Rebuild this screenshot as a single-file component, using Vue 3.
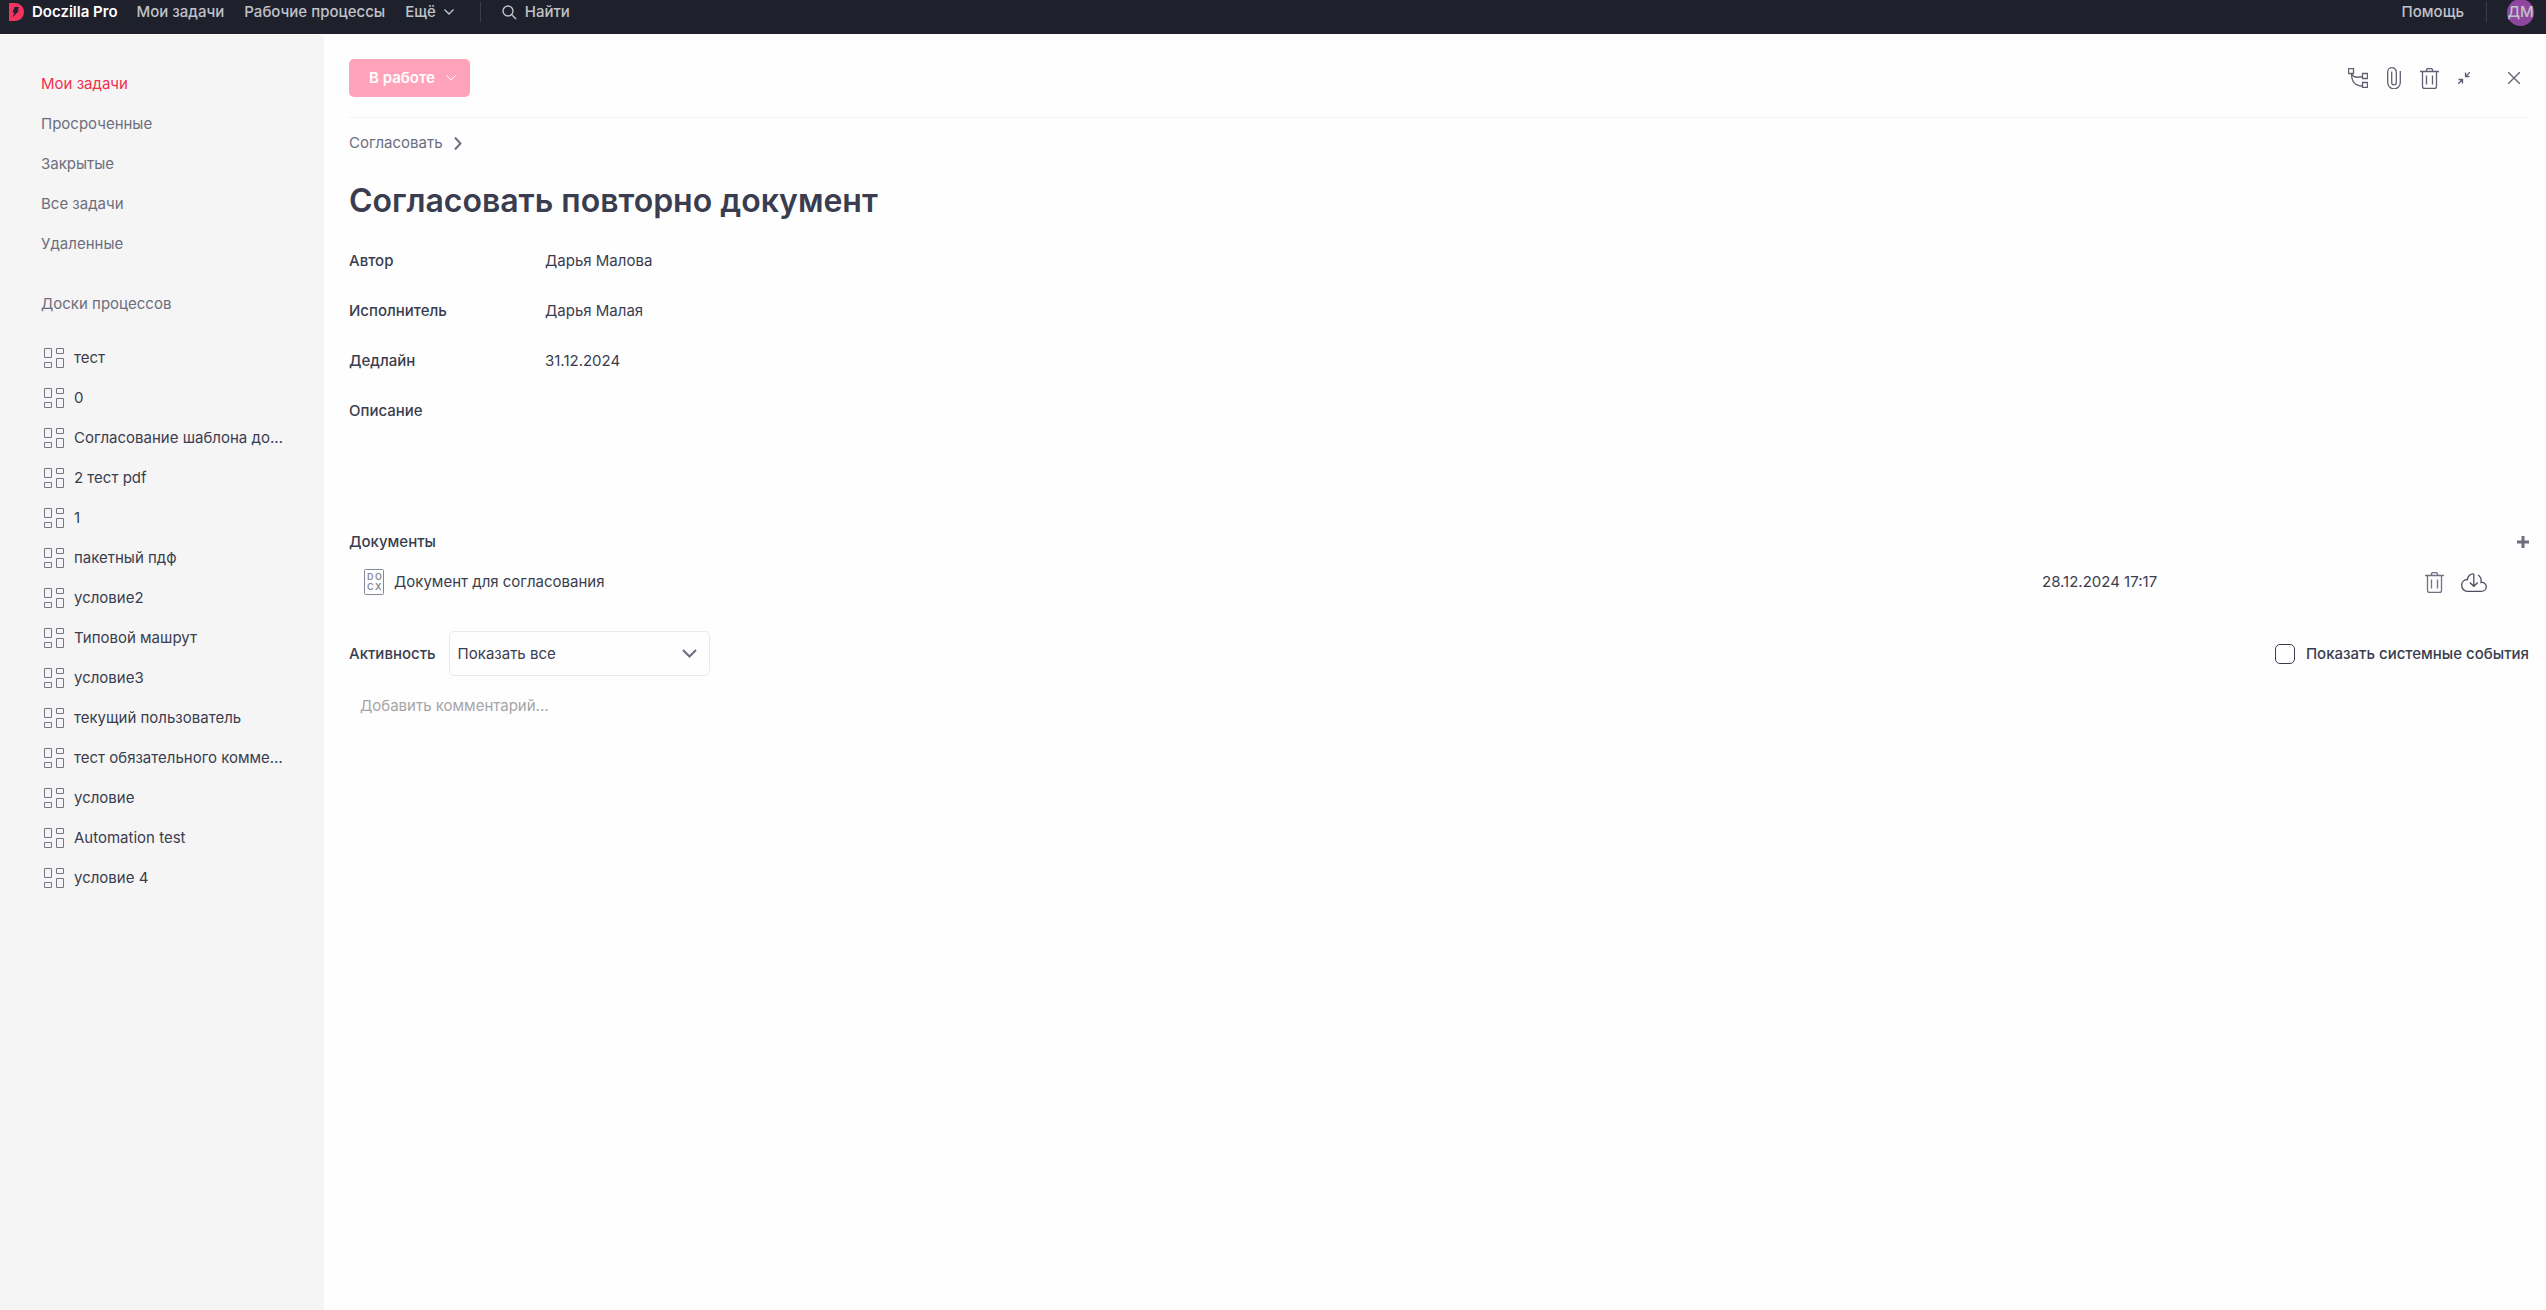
<script setup>
import { ref } from 'vue'

const filters = ['Мои задачи', 'Просроченные', 'Закрытые', 'Все задачи', 'Удаленные']
const boards = [
  'тест',
  '0',
  'Согласование шаблона до…',
  '2 тест pdf',
  '1',
  'пакетный пдф',
  'условие2',
  'Типовой машрут',
  'условие3',
  'текущий пользователь',
  'тест обязательного комме…',
  'условие',
  'Automation test',
  'условие 4',
]
const fields = [
  { label: 'Автор', value: 'Дарья Малова' },
  { label: 'Исполнитель', value: 'Дарья Малая' },
  { label: 'Дедлайн', value: '31.12.2024' },
  { label: 'Описание', value: '' },
]
const activity = ref('Показать все')
const showSystem = ref(false)
const comment = ref('')
</script>

<template>
  <div class="page">
    <header class="topbar">
      <a class="brand" href="#">
        <svg width="15" height="18" viewBox="0 0 15 18">
          <path d="M0 0H6C11 0 15 4 15 9S11 18 6 18H0Z" fill="#f2355f" />
          <path d="M5.500 4H10L8.500 7.500H10.200L3.500 14.500L5.500 9.500H3.500Z" fill="#1e202c" />
        </svg>
        <span>Doczilla Pro</span>
      </a>
      <nav class="topnav">
        <a href="#">Мои задачи</a>
        <a href="#">Рабочие процессы</a>
        <button type="button" class="more">
          Ещё
          <svg width="10" height="6" viewBox="0 0 10 6"><path d="M.5 .5L5 5L9.500 .5" /></svg>
        </button>
      </nav>
      <span class="rule"></span>
      <button type="button" class="search">
        <svg width="15" height="15" viewBox="0 0 15 15"><circle cx="6" cy="6" r="5" /><path d="M9.500 9.500L14 14" /></svg>
        Найти
      </button>
      <a class="help" href="#">Помощь</a>
      <span class="rule rule-right"></span>
      <button type="button" class="avatar">ДМ</button>
    </header>

    <div class="body">
      <aside class="sidebar">
        <nav class="filters">
          <a v-for="(f, i) in filters" :key="f" href="#" :class="{ active: i === 0 }">{{ f }}</a>
        </nav>
        <h2 class="boards-title">Доски процессов</h2>
        <nav class="boards">
          <a v-for="b in boards" :key="b" href="#">
            <svg width="20" height="20" viewBox="0 0 20 20">
              <path d="M.5 .5h7v9h-7zM12.500 .5h7v5h-7zM.5 14.500h7v5h-7zM12.500 10.500h7v9h-7z" />
            </svg>
            <span>{{ b }}</span>
          </a>
        </nav>
      </aside>

      <main class="task">
        <div class="toolbar">
          <button type="button" class="status">
            В работе
            <svg width="10" height="6" viewBox="0 0 10 6"><path d="M.5 .5L5 5L9.500 .5" /></svg>
          </button>
          <div class="tools">
            <button type="button" aria-label="Процесс">
              <svg width="20" height="20" viewBox="0 0 20 20">
                <path d="M.5 .5h5v5h-5zM14.500 5.500h5v5h-5zM14.500 14.500h5v5h-5zM3.500 5.500C3.500 13 6 18 14.500 18M3.500 5.500C5 9.500 9 10 14.500 8.500" />
              </svg>
            </button>
            <button type="button" aria-label="Вложения">
              <svg width="14" height="22" viewBox="0 0 14 22">
                <path d="M13.300 4V15.500A6.300 6.300 0 0 1 .7 15.500V5A4.300 4.300 0 0 1 9.300 5V15.500A2.300 2.300 0 0 1 4.700 15.500V4.500" />
              </svg>
            </button>
            <button type="button" aria-label="Удалить">
              <svg width="19" height="21" viewBox="0 0 19 21">
                <path d="M0 3.500H19M6.500 3.500V2A1.500 1.500 0 0 1 8 .5H11A1.500 1.500 0 0 1 12.500 2V3.500M2.500 3.500V18.500A2 2 0 0 0 4.500 20.500H14.500A2 2 0 0 0 16.500 18.500V3.500M6.500 7.500V16.500M12.500 7.500V16.500" />
              </svg>
            </button>
            <button type="button" aria-label="Свернуть">
              <svg width="12" height="12" viewBox="0 0 12 12">
                <path d="M12 0L7.500 4.500M7.500 .5V4.500H11.500M0 12L4.500 7.500M.5 7.500H4.500V11.500" />
              </svg>
            </button>
            <button type="button" class="close" aria-label="Закрыть">
              <svg width="12" height="12" viewBox="0 0 12 12"><path d="M0 0L12 12M12 0L0 12" /></svg>
            </button>
          </div>
        </div>

        <nav class="crumbs">
          <a href="#">Согласовать</a>
          <svg width="8" height="13" viewBox="0 0 8 13"><path d="M1 .5L6.500 6.500L1 12.500" /></svg>
        </nav>

        <h1>Согласовать повторно документ</h1>

        <dl class="fields">
          <div v-for="f in fields" :key="f.label">
            <dt>{{ f.label }}</dt>
            <dd>{{ f.value }}</dd>
          </div>
        </dl>

        <section class="docs">
          <div class="docs-head">
            <h3>Документы</h3>
            <button type="button" aria-label="Добавить">
              <svg width="12" height="12" viewBox="0 0 12 12"><path d="M6 0V12M0 6H12" /></svg>
            </button>
          </div>
          <div class="doc">
            <svg class="docx" width="20" height="26" viewBox="0 0 20 26">
              <rect x=".5" y=".5" width="19" height="25" rx="1" />
              <g>
                <text x="3" y="11">D</text><text x="11" y="11">O</text>
                <text x="3" y="21">C</text><text x="11" y="21">X</text>
              </g>
            </svg>
            <a class="doc-name" href="#">Документ для согласования</a>
            <time>28.12.2024 17:17</time>
            <div class="doc-tools">
              <button type="button" aria-label="Удалить документ">
                <svg width="19" height="21" viewBox="0 0 19 21">
                  <path d="M0 3.500H19M6.500 3.500V2A1.500 1.500 0 0 1 8 .5H11A1.500 1.500 0 0 1 12.500 2V3.500M2.500 3.500V18.500A2 2 0 0 0 4.500 20.500H14.500A2 2 0 0 0 16.500 18.500V3.500M6.500 7.500V16.500M12.500 7.500V16.500" />
                </svg>
              </button>
              <button type="button" class="cloud" aria-label="Скачать документ">
                <svg width="26" height="19" viewBox="0 0 26 19">
                  <path d="M12.800 1C9 .5 6.500 3.500 6.500 6.500C3 6.500 .7 9 .7 12.200C.7 15.500 3 18.300 6.500 18.300H20C23.500 18.300 25.300 16 25.300 13.700C25.300 11 23 9 20 9.500C20.500 6 19.500 3.500 17 2M12.800 1V13M8.800 9.500L12.800 13.300L16.800 9.500" />
                </svg>
              </button>
            </div>
          </div>
        </section>

        <section class="activity">
          <div class="activity-head">
            <label class="strong" for="activity">Активность</label>
            <div class="select">
              <select id="activity" v-model="activity">
                <option>Показать все</option>
              </select>
              <svg width="15" height="9" viewBox="0 0 15 9"><path d="M1 1L7.500 7.500L14 1" /></svg>
            </div>
            <label class="check">
              <input v-model="showSystem" type="checkbox" />
              Показать системные события
            </label>
          </div>
          <input v-model="comment" class="comment" type="text" aria-label="Комментарий" placeholder="Добавить комментарий..." />
        </section>
      </main>
    </div>
  </div>
</template>

<style>
body {
  margin: 0;
  background: #fefefe;
}
</style>

<style scoped>
.page {
  display: flex;
  flex-direction: column;
  min-height: 100vh;
  font: 15px/20px Inter, "Liberation Sans", sans-serif;
  color: #3a3d4f;
}
a {
  color: inherit;
  text-decoration: none;
}
button {
  display: flex;
  align-items: center;
  padding: 0;
  border: 0;
  background: none;
  color: inherit;
  font: inherit;
}
svg {
  display: block;
  flex: none;
  fill: none;
  stroke: currentColor;
}
h1, h2, h3, dl, dd {
  margin: 0;
}

.topbar {
  display: flex;
  align-items: center;
  box-sizing: border-box;
  height: 34px;
  padding: 0 12px 10px 9px;
  background: #1e202c;
  color: #c1c2c8;
  font-weight: 500;
}
.brand {
  display: flex;
  align-items: center;
  gap: 8px;
  color: #fff;
  font-weight: 600;
}
.brand svg {
  stroke: none;
}
.topnav {
  display: flex;
  gap: 20px;
  margin-left: 19px;
}
.more {
  gap: 8px;
}
.rule {
  width: 1px;
  height: 20px;
  margin: 0 21px 0 26px;
  background: #3b3d4d;
}
.rule-right {
  margin: 0 20px 0 22px;
}
.search {
  gap: 8px;
}
.search svg,
.more svg {
  stroke-width: 1.4;
}
.help {
  margin-left: auto;
}
.avatar {
  justify-content: center;
  width: 27px;
  height: 27px;
  border-radius: 50%;
  background: #8e479e;
}

.body {
  display: flex;
  flex: 1;
}
.sidebar {
  box-sizing: border-box;
  flex: none;
  width: 324px;
  margin-top: 1px;
  padding: 29px 36px 0 41px;
  border-radius: 0 4px 0 0;
  background: #f5f5f5;
}
.filters,
.boards {
  display: flex;
  flex-direction: column;
}
.filters {
  color: #6c6e7f;
}
.filters a {
  line-height: 40px;
}
.filters .active {
  color: #f0304f;
}
.boards-title {
  margin: 20px 0 14px;
  color: #6c6e7f;
  font-size: 15px;
  font-weight: 400;
  line-height: 40px;
}
.boards a {
  display: flex;
  align-items: center;
  gap: 10px;
  height: 40px;
  padding-left: 3px;
}
.boards svg {
  color: #757789;
}
.boards span {
  white-space: nowrap;
}

.task {
  flex: 1;
  min-width: 0;
  padding: 0 17px 0 25px;
}
.toolbar {
  display: flex;
  align-items: center;
  justify-content: space-between;
  padding: 25px 0 20px;
  border-bottom: 1px solid #f3f3f4;
}
.status {
  gap: 11px;
  height: 38px;
  padding: 0 14px 0 20px;
  border-radius: 5px;
  background: #ffa3ba;
  color: #fff;
  font-weight: 600;
}
.tools {
  display: flex;
  align-items: center;
  gap: 19px;
  padding-right: 9px;
  color: #5f6173;
}
.tools svg {
  stroke-width: 1.3;
}
.close {
  margin-left: 19px;
}
.crumbs {
  display: flex;
  align-items: center;
  gap: 11px;
  margin-top: 15px;
  color: #6c6e7f;
}
.crumbs svg {
  stroke-width: 2;
}
h1 {
  margin-top: 28px;
  font-size: 32px;
  font-weight: 600;
  line-height: 40px;
}
.fields {
  margin-top: 15px;
}
.fields div {
  display: flex;
  height: 50px;
  line-height: 50px;
}
.fields dt {
  width: 196px;
}
dt, h3, .strong {
  font-size: 15px;
  font-weight: 500;
}
.docs {
  margin-top: 96px;
}
.docs-head {
  display: flex;
  align-items: center;
  justify-content: space-between;
}
.docs-head button {
  color: #6c6e7f;
}
.docs-head svg {
  stroke-width: 3;
}
.doc {
  display: flex;
  align-items: center;
  height: 40px;
  margin-top: 10px;
  padding: 0 42px 0 15px;
}
.docx {
  color: #858796;
}
.docx text {
  fill: currentColor;
  stroke: none;
  font-size: 9px;
  font-weight: 600;
}
.doc-name {
  flex: 1;
  margin-left: 10px;
}
.doc time {
  width: 383px;
}
.doc-tools {
  display: flex;
  align-items: center;
  gap: 17px;
  color: #6f7184;
}
.doc-tools svg {
  stroke-width: 1.3;
}
.doc-tools .cloud {
  color: #4b4e5f;
}
.activity {
  margin-top: 29px;
}
.activity-head {
  display: flex;
  align-items: center;
}
.select {
  display: flex;
  align-items: center;
  position: relative;
  width: 261px;
  margin-left: 13px;
}
.select select {
  appearance: none;
  box-sizing: border-box;
  width: 100%;
  height: 45px;
  padding: 0 40px 0 8px;
  border: 1px solid #e9e9ec;
  border-radius: 5px;
  background: none;
  color: inherit;
  font: inherit;
}
.select svg {
  position: absolute;
  right: 13px;
  color: #6c6e7f;
  stroke-width: 2;
  pointer-events: none;
}
.check {
  display: flex;
  align-items: center;
  gap: 11px;
  margin-left: auto;
  font-weight: 500;
}
.check input {
  appearance: none;
  box-sizing: border-box;
  width: 20px;
  height: 20px;
  margin: 0;
  border: 1px solid #3a3d4f;
  border-radius: 5px;
}
.comment {
  box-sizing: border-box;
  width: 100%;
  height: 40px;
  margin-top: 9px;
  padding: 0 11px;
  border: 0;
  outline: 0;
  background: none;
  color: inherit;
  font: inherit;
}
.comment::placeholder {
  color: #a5a5a9;
  opacity: 1;
}
</style>
